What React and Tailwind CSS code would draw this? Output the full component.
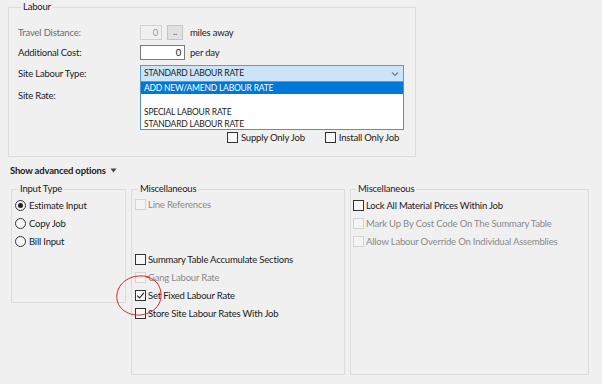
import React from "react";

function Check({ checked = false, disabled = false }) {
  return (
    <span
      className={
        "inline-flex h-[11px] w-[11px] shrink-0 items-center justify-center border " +
        (disabled ? "border-[#d4d4d4] bg-[#f4f4f4]" : "border-[#333333] bg-[#f7f7f7]")
      }
    >
      {checked && (
        <svg width="9" height="9" viewBox="0 0 9 9">
          <path d="M1.2 4.6 L3.6 7 L7.8 1.8" fill="none" stroke="#222" strokeWidth="1.1" />
        </svg>
      )}
    </span>
  );
}

function Radio({ checked = false }) {
  return (
    <span className="inline-flex h-[11px] w-[11px] shrink-0 items-center justify-center rounded-full border border-[#333333] bg-[#f7f7f7]">
      {checked && <span className="h-[5px] w-[5px] rounded-full bg-[#222]" />}
    </span>
  );
}

function CheckRow({ label, checked, disabled, className = "" }) {
  return (
    <div className={"flex h-[18px] items-center gap-[2px] whitespace-nowrap " + className}>
      <Check checked={checked} disabled={disabled} />
      <span className={disabled ? "text-[#8a8a8a]" : "text-[#1a1a1a]"}>{label}</span>
    </div>
  );
}

export default function App() {
  return (
    <div
      className="relative h-[384px] w-[602px] overflow-hidden bg-[#f0f0f0] pt-[1px] text-[9.5px] leading-[13px] tracking-[-0.2px] whitespace-nowrap text-[#1a1a1a]"
      style={{ fontFamily: 'Lato, "Noto Sans", sans-serif' }}
    >
      {/* Labour group */}
      <fieldset className="relative ml-[8px] h-[156px] w-[408px] border border-[#dcdcdc] pl-[9px]">
        <legend className="ml-[3px] px-[2px] leading-[12px]">Labour</legend>
        <div className="mt-[12px] flex flex-col">
          <div className="flex h-[15px] items-center">
            <span className="w-[122px] text-[#6d6d6d]">Travel Distance:</span>
            <span className="flex h-[15px] w-[22px] items-center justify-end border border-[#d0d0d0] bg-[#f0f0f0] pr-[3px] text-[#9a9a9a]">0</span>
            <span className="ml-[5px] flex h-[15px] w-[16px] items-center justify-center border border-[#c4c4c4] bg-[#e1e1e1] pb-[3px] text-[#555]">..</span>
            <span className="ml-[7px]">miles away</span>
          </div>
          <div className="mt-[5px] flex h-[15px] items-center">
            <span className="w-[122px]">Additional Cost:</span>
            <span className="flex h-[15px] w-[45px] items-center justify-end border border-[#7a7a7a] bg-white pr-[3px]">0</span>
            <span className="ml-[5px]">per day</span>
          </div>
          <div className="mt-[5px] flex h-[17px] items-center">
            <span className="w-[122px]">Site Labour Type:</span>
            <div className="relative w-[264px]">
              <div className="flex h-[17px] items-center justify-between border border-[#5a9bd5] bg-[#cce4f7] pl-[3px] pr-[4px] text-[8.5px]">
                <span>STANDARD LABOUR RATE</span>
                <svg width="8" height="6" viewBox="0 0 8 6">
                  <path d="M1 1.5 L4 4.5 L7 1.5" fill="none" stroke="#6b7f95" strokeWidth="1.2" />
                </svg>
              </div>
              <div className="absolute left-0 top-[17px] z-10 flex h-[48px] w-[264px] flex-col border border-t-0 border-[#5a8fc4] bg-white text-[8.5px] leading-[12px]">
                <div className="h-[12px] bg-[#0078d7] pl-[3px] text-white">ADD NEW/AMEND LABOUR RATE</div>
                <div className="h-[12px]" />
                <div className="h-[12px] pl-[3px]">SPECIAL LABOUR RATE</div>
                <div className="h-[11px] pl-[3px]">STANDARD LABOUR RATE</div>
              </div>
            </div>
          </div>
          <div className="mt-[6px] flex h-[14px] items-center">
            <span className="w-[122px]">Site Rate:</span>
          </div>
          <div className="mt-[28px] flex h-[14px] items-center">
            <div className="ml-[209px] flex items-center gap-[3px]">
              <Check />
              <span>Supply Only Job</span>
            </div>
            <div className="ml-[20px] flex items-center gap-[3px]">
              <Check />
              <span>Install Only Job</span>
            </div>
          </div>
        </div>
      </fieldset>

      {/* Show advanced options */}
      <div className="mt-[6px] ml-[10px] flex h-[14px] items-center gap-[4px] font-bold">
        <span>Show advanced options</span>
        <svg width="7" height="5" viewBox="0 0 7 5">
          <path d="M0.5 0.5 H6.5 L3.5 4.5 Z" fill="#444" />
        </svg>
      </div>

      {/* Advanced groups */}
      <div className="mt-[6px] ml-[11px] flex items-start gap-[5px]">
        <fieldset className="h-[120px] w-[115px] border border-[#dcdcdc] pl-[3px]">
          <legend className="ml-[3px] px-[2px] leading-[12px]">Input Type</legend>
          <div className="mt-[1px] flex flex-col">
            <div className="flex h-[18px] items-center gap-[3px]"><Radio checked /><span>Estimate Input</span></div>
            <div className="flex h-[18px] items-center gap-[3px]"><Radio /><span>Copy Job</span></div>
            <div className="flex h-[18px] items-center gap-[3px]"><Radio /><span>Bill Input</span></div>
          </div>
        </fieldset>

        <fieldset className="relative h-[192px] w-[214px] border border-[#dcdcdc] pl-[3px]">
          <legend className="ml-[3px] px-[2px] leading-[12px]">Miscellaneous</legend>
          <div className="flex flex-col">
            <CheckRow label="Line References" disabled />
            <CheckRow label="Summary Table Accumulate Sections" className="mt-[37px]" />
            <CheckRow label="Gang Labour Rate" disabled />
            <CheckRow label="Set Fixed Labour Rate" checked />
            <CheckRow label="Store Site Labour Rates With Job" />
          </div>
          <svg className="pointer-events-none absolute left-[-17px] top-[79px]" width="50" height="44" viewBox="0 0 50 44">
            <path
              d="M34 3 C20 -1 4 6 2 20 C0 33 12 42 25 41 C38 40 47 31 46 19 C45 10 39 4 31 3"
              fill="none"
              stroke="#d9252f"
              strokeWidth="1"
            />
          </svg>
        </fieldset>

        <fieldset className="h-[192px] w-[239px] border border-[#dcdcdc] pl-[2px]">
          <legend className="ml-[3px] px-[2px] leading-[12px]">Miscellaneous</legend>
          <div className="mt-[1px] flex flex-col">
            <CheckRow label="Lock All Material Prices Within Job" />
            <CheckRow label="Mark Up By Cost Code On The Summary Table" disabled />
            <CheckRow label="Allow Labour Override On Individual Assemblies" disabled />
          </div>
        </fieldset>
      </div>
    </div>
  );
}
